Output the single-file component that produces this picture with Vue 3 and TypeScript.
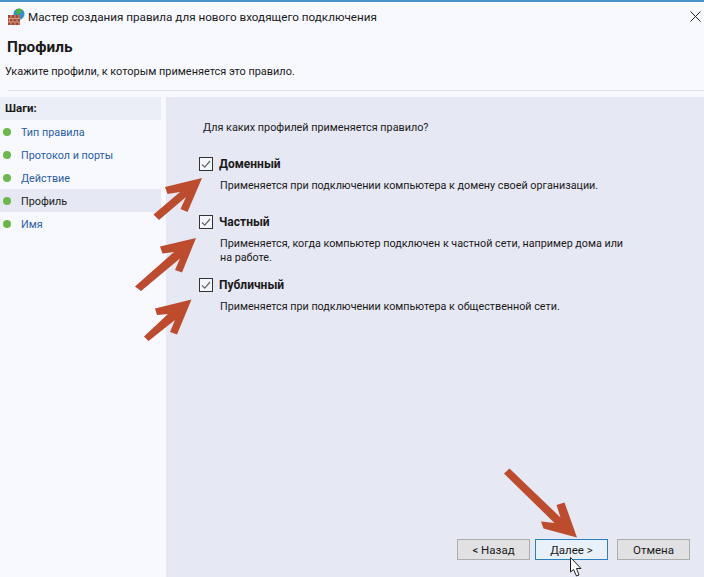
<script setup lang="ts">
const steps = [
  { label: 'Тип правила', active: false },
  { label: 'Протокол и порты', active: false },
  { label: 'Действие', active: false },
  { label: 'Профиль', active: true },
  { label: 'Имя', active: false },
]
const profiles = [
  { name: 'Доменный', text: 'Применяется при подключении компьютера к домену своей организации.', cls: 'p1' },
  { name: 'Частный', text: 'Применяется, когда компьютер подключен к частной сети, например дома или на работе.', cls: 'p2' },
  { name: 'Публичный', text: 'Применяется при подключении компьютера к общественной сети.', cls: 'p3' },
]
</script>

<template>
  <div class="window">
    <div class="titlebar">
      <svg class="appicon" width="18" height="18" viewBox="0 0 18 18">
        <circle cx="12" cy="6" r="5.500" fill="#2f8fd0" />
        <path d="M9 2c2-2 5-1 6 0l-1 3-3 2-2-2z" fill="#4fae4a" />
        <rect x="1" y="7" width="12" height="10" fill="#a5492f" />
        <path d="M1 10.500h12M1 14h12M4 7v3.500M8 7v3.500M12 7v3.500M2.500 10.500V14M6 10.500V14M10 10.500V14M4 14v3M8 14v3M12 14v3" stroke="#d9ab96" stroke-width=".8" fill="none" />
      </svg>
      <span class="title">Мастер создания правила для нового входящего подключения</span>
      <svg class="close" width="11" height="11" viewBox="0 0 11 11">
        <path d="M.5.500l10 10M10.500.500l-10 10" stroke="#222" stroke-width="1" fill="none" />
      </svg>
    </div>
    <h1 class="heading">Профиль</h1>
    <p class="subtitle">Укажите профили, к которым применяется это правило.</p>
    <div class="divider"></div>
    <div class="content">
      <aside class="sidebar">
        <div class="steps-head">Шаги:</div>
        <div v-for="s in steps" :key="s.label" class="step" :class="{ active: s.active }">
          <span class="dot"></span>
          <span class="step-label">{{ s.label }}</span>
        </div>
      </aside>
      <main class="main">
        <p class="question">Для каких профилей применяется правило?</p>
        <div v-for="p in profiles" :key="p.name" class="profile" :class="p.cls">
          <div class="check-row">
            <svg class="check" width="14" height="14" viewBox="0 0 14 14">
              <rect x=".5" y=".5" width="13" height="13" fill="#f5f6fb" stroke="#333" />
              <path d="M3 7.500l2.800 2.700L11 4" stroke="#666" stroke-width="1.200" fill="none" />
            </svg>
            <span class="profile-name">{{ p.name }}</span>
          </div>
          <p class="profile-text">{{ p.text }}</p>
        </div>
        <div class="footer">
          <button class="btn">&lt; Назад</button>
          <button class="btn primary">Далее &gt;</button>
          <button class="btn cancel">Отмена</button>
        </div>
      </main>
    </div>
    <svg class="overlay" width="704" height="577" viewBox="0 0 704 577">
      <g fill="#bd4b2e">
        <path d="M202 178L165 187L167.500 194L180 192L153.500 214.500L159 220L186 197L180.500 209L187.500 212Z" />
        <path d="M196 238L160 246.500L162.500 253.500L174 252L135 286.500L141 291L180 258.500L175 270L182 272.500Z" />
        <path d="M191.500 299.500L155 308.500L157 315L168 314L144 336.500L148.500 341L175 320L170 332L177 334.500Z" />
        <path d="M577 537.500L564.500 502.500L556.500 505L560.500 517.500L509.500 468.500L504 473.500L554.500 523L541 521.500L543.500 528.500Z" />
      </g>
      <path d="M570.500 557.500V572L573.500 569.500L576.500 576L579 575L576.500 568.500H581Z" fill="#fff" stroke="#222" stroke-width="1" />
    </svg>
  </div>
</template>

<style scoped>
.window {
  position: relative;
  width: 704px;
  height: 577px;
  box-sizing: border-box;
  overflow: hidden;
  display: flex;
  flex-direction: column;
  background: #f8f9ff;
  border-top: 2px solid #4a93c8;
  font-family: Roboto, "Noto Sans", sans-serif;
  font-size: 10.800px;
  color: #1a1a1a;
}
.titlebar {
  display: flex;
  align-items: center;
  height: 30px;
  padding: 0 8px 0 7px;
  flex: none;
}
.appicon { margin-right: 3px; }
.title { font-size: 11.680px; }
.close { margin-left: auto; margin-right: -5px; margin-top: -2px; }
.heading {
  margin: 6px 0 0 7px;
  font-size: 15.400px;
  line-height: 18px;
  font-weight: 700;
}
.subtitle {
  margin: 8px 0 0 5px;
  line-height: 16px;
  font-size: 10.950px;
}
.divider {
  height: 1px;
  margin: 10px 0 0 8px;
  background: #dfe2ee;
  flex: none;
}
.content {
  flex: 1;
  display: flex;
  margin-top: 6px;
  min-height: 0;
}
.sidebar {
  width: 163px;
  flex: none;
  padding-right: 2px;
  box-sizing: border-box;
}
.steps-head {
  height: 23px;
  line-height: 23px;
  padding-left: 5px;
  font-size: 11.500px;
  font-weight: 700;
  background: #eceef7;
}
.step {
  display: flex;
  align-items: center;
  height: 23px;
  padding-left: 3px;
}
.step.active { background: #e6e8f3; }
.dot {
  width: 8px;
  height: 8px;
  border-radius: 50%;
  background: #6cb84a;
  flex: none;
}
.step-label {
  margin: 1px 0 0 10px;
  color: #2a5ea8;
}
.step.active .step-label { color: #1a1a1a; }
.main {
  flex: 1;
  display: flex;
  flex-direction: column;
  background: #e6e8f3;
  margin-left: 3px;
  padding-left: 37px;
  min-width: 0;
}
.question {
  margin: 23px 0 0;
  line-height: 16px;
}
.profile { flex: none; }
.p1 { margin-top: 20px; }
.p2 { margin-top: 21px; }
.p3 { margin-top: 12px; }
.check-row {
  display: flex;
  align-items: center;
  height: 16px;
  margin-left: -4px;
}
.check { flex: none; }
.profile-name {
  margin-left: 6px;
  font-size: 12px;
  font-weight: 700;
}
.profile-text {
  margin: 7px 0 0 17px;
  width: 410px;
  line-height: 14px;
  font-size: 10.750px;
}
.footer {
  margin-top: auto;
  display: flex;
  padding-bottom: 17px;
  padding-left: 254px;
}
.btn {
  width: 73px;
  height: 21px;
  padding: 0;
  box-sizing: border-box;
  border: 1px solid #adadad;
  background: #e1e1e3;
  font: inherit;
  font-size: 11.500px;
  color: #1a1a1a;
}
.btn.primary {
  margin: 0 9px 0 5px;
  border: 1px solid #2a80bd;
  background: #e8f1fa;
}
.overlay {
  position: absolute;
  left: 0;
  top: -2px;
  pointer-events: none;
}
</style>
